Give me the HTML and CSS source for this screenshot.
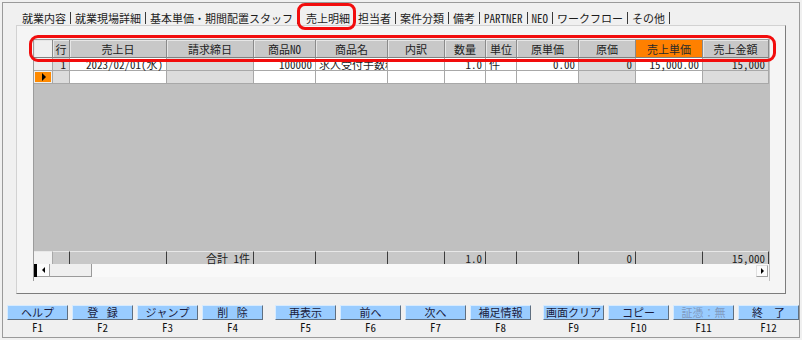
FILE: index.html
```html
<!DOCTYPE html>
<html lang="ja">
<head>
<meta charset="utf-8">
<title>売上明細</title>
<link rel="stylesheet" href="styles.css">
</head>
<body>
<div class="window">
  <div class="tabs">
    <div class="tab first">就業内容</div>
    <div class="tab">就業現場詳細</div>
    <div class="tab">基本単価・期間配置スタッフ</div>
    <div class="tab active">売上明細<span class="mark mark-tab"></span></div>
    <div class="tab">担当者</div>
    <div class="tab">案件分類</div>
    <div class="tab">備考</div>
    <div class="tab">PARTNER</div>
    <div class="tab">NEO</div>
    <div class="tab">ワークフロー</div>
    <div class="tab">その他</div>
  </div>
  <div class="panel">
    <div class="grid">
      <div class="row head">
        <div class="c corner"></div>
        <div class="c">行</div>
        <div class="c">売上日</div>
        <div class="c">請求締日</div>
        <div class="c">商品NO</div>
        <div class="c">商品名</div>
        <div class="c">内訳</div>
        <div class="c">数量</div>
        <div class="c">単位</div>
        <div class="c">原単価</div>
        <div class="c">原価</div>
        <div class="c hl">売上単価</div>
        <div class="c">売上金額</div>
      </div>
      <div class="row data">
        <div class="c sel"></div>
        <div class="c g r">1</div>
        <div class="c r">2023/02/01(水)</div>
        <div class="c g"></div>
        <div class="c r">100000</div>
        <div class="c clip">求人受付手数料</div>
        <div class="c"></div>
        <div class="c r">1.0</div>
        <div class="c">件</div>
        <div class="c r">0.00</div>
        <div class="c g r">0</div>
        <div class="c r">15,000.00</div>
        <div class="c g r">15,000</div>
      </div>
      <div class="row data">
        <div class="c sel cur"><span class="arrow"></span></div>
        <div class="c g"></div>
        <div class="c"></div>
        <div class="c g"></div>
        <div class="c"></div>
        <div class="c"></div>
        <div class="c"></div>
        <div class="c"></div>
        <div class="c"></div>
        <div class="c"></div>
        <div class="c g"></div>
        <div class="c"></div>
        <div class="c g"></div>
      </div>
      <div class="empty"></div>
      <div class="row foot">
        <div class="c first"></div>
        <div class="c"></div>
        <div class="c"></div>
        <div class="c r">合計 1件</div>
        <div class="c"></div>
        <div class="c"></div>
        <div class="c"></div>
        <div class="c r">1.0</div>
        <div class="c"></div>
        <div class="c"></div>
        <div class="c r">0</div>
        <div class="c"></div>
        <div class="c r">15,000</div>
      </div>
      <div class="hscroll">
        <div class="sb-block"></div>
        <div class="sb-btn"><span class="tri-l"></span></div>
        <div class="sb-thumb"></div>
        <div class="sb-track"></div>
        <div class="sb-btn end"><span class="tri-r"></span></div>
      </div>
      <span class="mark mark-head"></span>
    </div>
  </div>
  <div class="fkeys">
    <div class="key"><div class="btn">ヘルプ</div><div class="fn">F1</div></div>
    <div class="key"><div class="btn ws">登 録</div><div class="fn">F2</div></div>
    <div class="key"><div class="btn">ジャンプ</div><div class="fn">F3</div></div>
    <div class="key"><div class="btn ws">削 除</div><div class="fn">F4</div></div>
    <div class="key gs"><div class="btn">再表示</div><div class="fn">F5</div></div>
    <div class="key"><div class="btn">前へ</div><div class="fn">F6</div></div>
    <div class="key"><div class="btn">次へ</div><div class="fn">F7</div></div>
    <div class="key"><div class="btn">補足情報</div><div class="fn">F8</div></div>
    <div class="key gs"><div class="btn">画面クリア</div><div class="fn">F9</div></div>
    <div class="key"><div class="btn">コピー</div><div class="fn">F10</div></div>
    <div class="key"><div class="btn off">証憑：無</div><div class="fn">F11</div></div>
    <div class="key"><div class="btn">終　了</div><div class="fn">F12</div></div>
  </div>
</div>
</body>
</html>
```
FILE: styles.css
```css
* { box-sizing: border-box; }

body {
  margin: 0;
  background: #f0f0f0;
  font-family: "Noto Sans Mono CJK JP", "Noto Sans CJK JP", monospace;
  font-size: 11px;
  color: #1c1c1c;
}

.window {
  margin: 2px 0 0 2px;
  width: 798px;
  height: 336px;
  border: 1px solid #9a9a9a;
  display: flex;
  flex-direction: column;
}

/* tabs */
.tabs {
  display: flex;
  margin: 9px 0 0 13px;
  height: 13px;
}
.tab {
  position: relative;
  padding: 0 4px;
  height: 12px;
  line-height: 12px;
  border-right: 1px solid #3a3a3a;
  white-space: nowrap;
}
.tab.first { padding-left: 6px; }
.tab.active {
  padding: 0 4px 0 8px;
  border-right: none;
}

.mark {
  position: absolute;
  border: 3px solid #f20d0d;
  pointer-events: none;
}
.mark-tab {
  left: -1px;
  top: -9px;
  width: 59px;
  height: 27px;
  border-radius: 8px;
}

/* panel */
.panel {
  margin-left: 13px;
  width: 770px;
  height: 269px;
  border: 1px solid;
  border-color: #d2d2d2 #7c7c7c #7c7c7c #d2d2d2;
  background: #f5f5f5;
  padding: 13px 0 0 16px;
}

.grid {
  position: relative;
  width: 737px;
  border-left: 1px solid #9c9c9c;
  border-right: 1px solid #c0c0c0;
  border-top: 1px solid #9c9c9c;
  padding-bottom: 4px;
}

.row {
  display: grid;
  grid-template-columns: 19px 17px 97px 87px 62px 72px 57px 41px 31px 62px 57px 67px 66px;
}

.c {
  white-space: nowrap;
  padding: 0 3px;
  min-width: 0;
}
.c.r { text-align: right; }
.c.clip { overflow: hidden; text-overflow: clip; }

.head .c {
  height: 18px;
  line-height: 18px;
  text-align: center;
  background: #c8c8c8;
  border-right: 1px solid #8a8a8a;
  border-bottom: 1px solid #808080;
  box-shadow: inset 1px 1px 0 #e6e6e6;
  color: #222;
  padding: 0;
}
.head .c.corner { background: #efefef; }
.head .c.hl { background: #ff8000; box-shadow: none; color: #2a2a2a; }

.data .c {
  height: 13px;
  line-height: 12px;
  background: #ffffff;
  border-right: 1px solid #a8a8a8;
  border-bottom: 1px solid #a8a8a8;
}
.data .c.g { background: #dcdcdc; }
.data .c.sel { background: #efefef; padding: 0; }
.data .c.cur {
  display: flex;
  align-items: center;
  justify-content: center;
  background: #ff8a00;
  box-shadow: inset 0 0 0 1px #efefef;
}
.arrow {
  width: 0;
  height: 0;
  border-left: 4px solid #000;
  border-top: 4px solid transparent;
  border-bottom: 4px solid transparent;
  margin-left: 1px;
}

.empty {
  height: 167px;
  background: #c0c0c0;
}

.foot .c {
  height: 13px;
  line-height: 12px;
  background: #c8c8c8;
  border-top: 1px solid #e8e8e8;
  border-right: 1px solid #3c3c3c;
}
.foot .c.first {
  background: #f2f2f2;
  border-right: 1px solid #a8a8a8;
}

/* scrollbar */
.hscroll {
  display: flex;
  height: 13px;
  background: #f9f9f9;
}
.sb-block { width: 3px; background: #000; }
.sb-btn {
  width: 13px;
  background: #fbfbfb;
  border-right: 1px solid #a0a0a0;
  border-bottom: 1px solid #a0a0a0;
  display: flex;
  align-items: center;
  justify-content: center;
}
.sb-btn.end {
  width: 12px;
  margin: 1px 1px 0 0;
  border-left: 1px solid #e0e0e0;
  border-top: 1px solid #e0e0e0;
}
.tri-l, .tri-r {
  width: 0;
  height: 0;
  border-top: 3px solid transparent;
  border-bottom: 3px solid transparent;
}
.tri-l { border-right: 3px solid #000; }
.tri-r { border-left: 3px solid #000; }
.sb-thumb {
  width: 42px;
  background: #efefef;
  border-right: 1px solid #9a9a9a;
  border-bottom: 1px solid #9a9a9a;
}
.sb-track { flex: 1; }

.mark-head {
  left: -5px;
  top: -5px;
  width: 747px;
  height: 27px;
  border-radius: 9px;
}

/* function keys */
.fkeys {
  display: flex;
  gap: 4px;
  margin: 11px 0 0 4px;
}
.key {
  width: 61px;
  display: flex;
  flex-direction: column;
  align-items: center;
}
.key.gs { margin-left: 8px; }
.btn {
  width: 61px;
  height: 15px;
  line-height: 13px;
  text-align: center;
  background: #99ccff;
  border: 1px solid;
  border-color: #d6ebff #5f6f80 #5f6f80 #d6ebff;
  color: #1b1b3c;
  white-space: nowrap;
}
.btn.ws { word-spacing: 3px; }
.btn.off { color: #7f98bd; }
.fn {
  margin-top: 1px;
  line-height: 12px;
  color: #111;
}
```
